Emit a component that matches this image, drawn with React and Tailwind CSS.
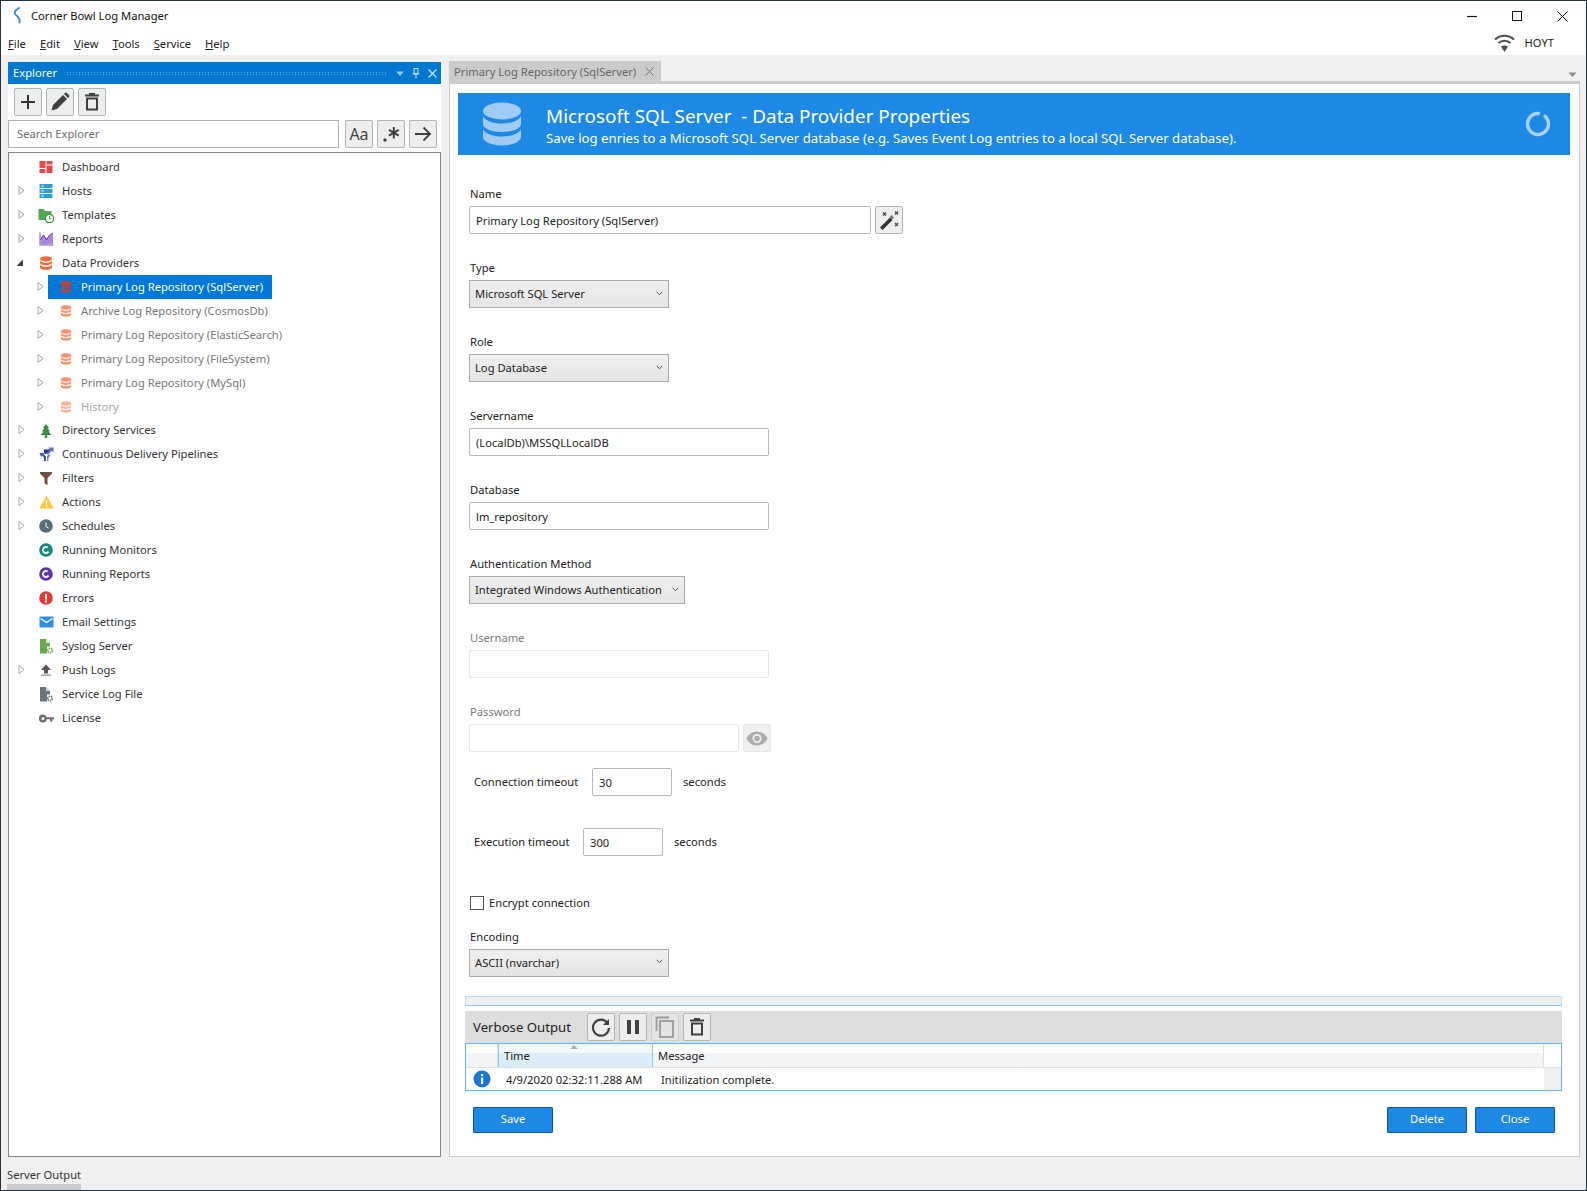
import React from "react";

const Chevron = ({ open }) =>
  open ? (
    <svg width="9" height="9" viewBox="0 0 9 9" className="mr-[2px] mb-[2px]"><path d="M8 1.5V8H1.5z" fill="#404040" /></svg>
  ) : (
    <svg width="9" height="11" viewBox="0 0 9 11" className="mb-[2px]"><path d="M2 1.5L7 5.5L2 9.5z" fill="#fff" stroke="#a6a6a6" /></svg>
  );

const Db = ({ color = "#ef6c3f", size = 14 }) => (
  <svg width={size} height={size} viewBox="0 0 14 14" fill={color}>
    <ellipse cx="7" cy="2.8" rx="6" ry="2.6" />
    <path d="M1 4.6C2 6.2 4.4 6.9 7 6.9s5-.7 6-2.3v2.2c0 1.5-2.7 2.5-6 2.5S1 8.300 1 6.800z" />
    <path d="M1 8.600C2 10.200 4.400 10.900 7 10.900s5-.7 6-2.300v2.600C13 12.700 10.300 13.800 7 13.800s-6-1.100-6-2.600z" />
  </svg>
);

const I = {
  dash: (
    <svg width="14" height="14" viewBox="0 0 14 14" fill="#e24c4c">
      <rect x="0.500" y="1" width="6" height="7" /><rect x="7.500" y="1" width="6" height="3.500" />
      <rect x="0.500" y="9" width="6" height="4" /><rect x="7.500" y="5.500" width="6" height="7.500" />
    </svg>
  ),
  hosts: (
    <svg width="14" height="16" viewBox="0 0 14 16">
      <g fill="#2b9fd9"><rect x="0.500" y="1" width="13" height="4" /><rect x="0.500" y="6" width="13" height="4" /><rect x="0.500" y="11" width="13" height="4" /></g>
      <g fill="#d4eefa"><rect x="2" y="2.500" width="3" height="1" /><rect x="2" y="7.500" width="3" height="1" /><rect x="2" y="12.500" width="3" height="1" /></g>
    </svg>
  ),
  tpl: (
    <svg width="16" height="15" viewBox="0 0 16 15">
      <path d="M0.500 1h5l1.500 2h6.500v9H0.500z" fill="#55a84f" />
      <circle cx="11.500" cy="10.500" r="4.200" fill="#fff" stroke="#3f9a44" strokeWidth="1.300" />
      <path d="M11.500 8v2.700h2" fill="none" stroke="#3f9a44" />
    </svg>
  ),
  rep: (
    <svg width="15" height="14" viewBox="0 0 15 14">
      <path d="M0.500 0.500h1v12h13v1h-14z" fill="#7d57c1" />
      <path d="M1.500 12.500V6l3-3 3 3.500L10 4l4-3v11.500z" fill="#a78ad8" />
      <path d="M1.500 8l3-5 3 5 3-5 3.500-2" fill="none" stroke="#6a3fb5" />
    </svg>
  ),
  tree: (
    <svg width="14" height="14" viewBox="0 0 14 14" fill="#3d8b40">
      <path d="M7 0L10 4H8.700L11 7.500H9.500L12.500 11H1.500L4.500 7.500H3L5.300 4H4z" /><rect x="5.800" y="11" width="2.400" height="3" fill="#5d7f3f" />
    </svg>
  ),
  pipe: (
    <svg width="15" height="14" viewBox="0 0 15 14" fill="#3f51b5">
      <path d="M9.500 0.500h5v5l-1.700-1.700-4 4-2.200-2.200 3.900-4z" fill="#5c6bc0" />
      <path d="M5 2.500h5v1.200L6.500 7.300 5 6z" fill="#283593" />
      <path d="M0.500 6h5l-1 1 2.500 2.500V14H5V10.500L3 8.500 2 9.800z" />
      <path d="M8 9l2-2 1.500 1.500L9.500 11V14H8z" fill="#7986cb" />
    </svg>
  ),
  filter: (
    <svg width="14" height="14" viewBox="0 0 14 14" fill="#6d4c41"><path d="M1 1h12v1.500L8.500 7v7l-3-1.500V7L1 2.500z" /></svg>
  ),
  warn: (
    <svg width="15" height="14" viewBox="0 0 15 14">
      <path d="M7.500 0.500L14.800 13.500H0.200z" fill="#fdc93b" /><rect x="6.900" y="5" width="1.300" height="4.500" fill="#fff" /><rect x="6.900" y="10.500" width="1.300" height="1.400" fill="#fff" />
    </svg>
  ),
  clock: (
    <svg width="14" height="14" viewBox="0 0 14 14">
      <circle cx="7" cy="7" r="6.800" fill="#546e7a" /><path d="M7 3.500V7.500L9.500 9" fill="none" stroke="#fff" strokeWidth="1" />
    </svg>
  ),
  cTeal: (
    <svg width="14" height="14" viewBox="0 0 14 14">
      <circle cx="7" cy="7" r="6.800" fill="#12897b" /><circle cx="7" cy="7" r="3" fill="none" stroke="#fff" strokeWidth="1.800" strokeDasharray="14 5" transform="rotate(30 7 7)" />
    </svg>
  ),
  cPurple: (
    <svg width="14" height="14" viewBox="0 0 14 14">
      <circle cx="7" cy="7" r="6.800" fill="#5e35b1" /><circle cx="7" cy="7" r="3" fill="none" stroke="#fff" strokeWidth="1.800" strokeDasharray="14 5" transform="rotate(30 7 7)" />
    </svg>
  ),
  err: (
    <svg width="14" height="14" viewBox="0 0 14 14">
      <circle cx="7" cy="7" r="6.800" fill="#e53935" /><rect x="6" y="3" width="2" height="5.500" fill="#fff" /><rect x="6" y="9.500" width="2" height="2" fill="#fff" />
    </svg>
  ),
  mail: (
    <svg width="15" height="12" viewBox="0 0 15 12">
      <rect x="0.500" y="0.500" width="14" height="11" rx="1" fill="#2f8de4" /><path d="M1.500 2.500L7.500 6.500L13.500 2.500" fill="none" stroke="#fff" strokeWidth="1.200" />
    </svg>
  ),
  sys: (
    <svg width="14" height="15" viewBox="0 0 14 15">
      <path d="M1 0h6l4 4v3.500H8V14.500H1z" fill="#6aa84f" /><path d="M7 0v4h4z" fill="#fff" opacity="0.700" /><circle cx="11" cy="11.500" r="2.300" fill="none" stroke="#6aa84f" strokeWidth="1.600" strokeDasharray="1.400 .7" />
    </svg>
  ),
  push: (
    <svg width="12" height="12" viewBox="0 0 12 12" fill="#555"><path d="M6 0.500L11 6H8v3.500H4V6H1z" /><rect x="1" y="10.500" width="10" height="1.200" fill="#888" /></svg>
  ),
  file: (
    <svg width="14" height="15" viewBox="0 0 14 15">
      <path d="M1 0h6l4 4v3.500H8V14.500H1z" fill="#6b747a" /><path d="M7 0v4h4z" fill="#fff" opacity="0.700" /><circle cx="11" cy="11.500" r="2.300" fill="none" stroke="#6b747a" strokeWidth="1.600" strokeDasharray="1.400 .7" />
    </svg>
  ),
  key: (
    <svg width="15" height="9" viewBox="0 0 15 9" fill="#707070"><path d="M4 0.500a4 4 0 0 1 3.800 2.700H15v2h-1.500V7.500H11V5.200H7.800A4 4 0 1 1 4 0.500zM4 3a1.500 1.500 0 1 0 0 3 1.500 1.500 0 0 0 0-3z" fillRule="evenodd" /></svg>
  ),
};

const rows = [
  { t: "Dashboard", i: I.dash },
  { t: "Hosts", i: I.hosts, e: 1 },
  { t: "Templates", i: I.tpl, e: 1 },
  { t: "Reports", i: I.rep, e: 1 },
  { t: "Data Providers", i: <Db />, e: 2 },
  { t: "Primary Log Repository (SqlServer)", c: 1, sel: 1 },
  { t: "Archive Log Repository (CosmosDb)", c: 1 },
  { t: "Primary Log Repository (ElasticSearch)", c: 1 },
  { t: "Primary Log Repository (FileSystem)", c: 1 },
  { t: "Primary Log Repository (MySql)", c: 1 },
  { t: "History", c: 2 },
  { t: "Directory Services", i: I.tree, e: 1, short: 1 },
  { t: "Continuous Delivery Pipelines", i: I.pipe, e: 1 },
  { t: "Filters", i: I.filter, e: 1 },
  { t: "Actions", i: I.warn, e: 1 },
  { t: "Schedules", i: I.clock, e: 1 },
  { t: "Running Monitors", i: I.cTeal },
  { t: "Running Reports", i: I.cPurple },
  { t: "Errors", i: I.err },
  { t: "Email Settings", i: I.mail },
  { t: "Syslog Server", i: I.sys },
  { t: "Push Logs", i: I.push, e: 1 },
  { t: "Service Log File", i: I.file },
  { t: "License", i: I.key },
];

const TreeRow = ({ r }) =>
  r.c ? (
    <div className="flex h-[24px] items-center">
      <div className="flex w-[36px] justify-end"><Chevron /></div>
      <div className={"ml-[3px] flex h-[24px] items-center pl-[12px] pr-[8px] " + (r.sel ? "w-[224px] bg-[#0078d7] text-white" : r.c === 2 ? "text-[#a8a8a8]" : "text-[#777777]")}>
        <span className={"mr-[9px] flex w-[12px] justify-center " + (r.sel ? "" : r.c === 2 ? "opacity-50" : "opacity-75")}>
          <Db size={12} color={r.sel ? "#d1402f" : "#ef6c3f"} />
        </span>
        <span className="whitespace-nowrap">{r.t}</span>
      </div>
    </div>
  ) : (
    <div className={"flex items-center " + (r.short ? "h-[23px]" : "h-[24px]")}>
      <div className="flex w-[17px] justify-end">{r.e === 1 && <Chevron />}{r.e === 2 && <Chevron open />}</div>
      <span className="ml-[12px] mr-[8px] flex w-[16px] justify-center">{r.i}</span>
      <span className="whitespace-nowrap text-[#333333]">{r.t}</span>
    </div>
  );

const IconBtn = ({ children, dim, w = "w-[28px]" }) => (
  <div className={"flex h-[28px] " + w + " items-center justify-center rounded-[2px] border border-[#b5b5b5] " + (dim ? "bg-[#e4e4e4] border-[#cfcfcf]" : "bg-[#eeeeee]")}>
    {children}
  </div>
);

const Label = ({ children, dim }) => (
  <div className={"h-[16px] pl-[1px] leading-[16px] " + (dim ? "text-[#7a7a7a]" : "text-[#222222]")}>{children}</div>
);

const Input = ({ w, value, dim }) => (
  <input
    readOnly
    value={value || ""}
    className={"block h-[28px] rounded-[2px] border bg-white px-[6px] outline-none " + w + " " + (dim ? "border-[#e6e6e6]" : "border-[#b9b9b9]")}
  />
);

const Select = ({ w, value }) => (
  <div className={"flex h-[28px] items-center justify-between border border-[#acacac] bg-gradient-to-b from-[#f0f0f0] to-[#e5e5e5] pl-[5px] pr-[5px] text-[#222222] " + w}>
    <span className="whitespace-nowrap pt-[1px]">{value}</span>
    <svg width="7" height="5" viewBox="0 0 7 5" className="mb-[2px]"><path d="M0.700 0.800L3.500 3.800L6.300 0.800" fill="none" stroke="#555" /></svg>
  </div>
);

const Field = ({ label, dim, children }) => (
  <div className="h-[74px]">
    <Label dim={dim}>{label}</Label>
    <div className="mt-[4px] flex gap-[4px]">{children}</div>
  </div>
);

const Trash = () => (
  <svg width="16" height="18" viewBox="0 0 16 18" fill="none" stroke="#404040" strokeWidth="2">
    <path d="M1 2.500h14" /><path d="M5 1h6" /><rect x="3" y="5.500" width="10" height="11" />
  </svg>
);

const PrimaryBtn = ({ children }) => (
  <div className="flex h-[26px] w-[80px] items-center justify-center rounded-[1px] border border-[#0f55a8] bg-[#1e88e5] text-white">{children}</div>
);

export default function App() {
  return (
    <div className="flex h-[1191px] w-[1587px] flex-col overflow-hidden border border-[#26323a] bg-[#f0f0f0] font-['Noto_Sans',sans-serif] text-[11.2px] text-[#222222]">
      {/* title bar */}
      <div className="flex h-[30px] items-center bg-white">
        <svg width="10" height="17" viewBox="0 0 10 17" className="ml-[11px] mb-[1px]" fill="none">
          <path d="M7 1C4 3 1.500 5 3.500 7.500S9 11 7.500 15.500" stroke="#3f8fe0" strokeWidth="2" strokeLinecap="round" />
        </svg>
        <span className="ml-[9px] text-[#111111]">Corner Bowl Log Manager</span>
        <div className="ml-auto mr-[18px] flex items-center gap-[35px]">
          <svg width="10" height="10" viewBox="0 0 10 10"><path d="M0 5.500h10" stroke="#111" strokeWidth="1.200" /></svg>
          <svg width="10" height="10" viewBox="0 0 10 10"><rect x="0.500" y="0.500" width="9" height="9" fill="none" stroke="#111" /></svg>
          <svg width="11" height="11" viewBox="0 0 11 11"><path d="M0.500 0.500l10 10M10.500 0.500l-10 10" stroke="#111" /></svg>
        </div>
      </div>
      {/* menu */}
      <div className="flex h-[24px] items-center bg-white">
        <div className="ml-[7px] flex gap-[14px] pt-[2px] text-[#222222]">
          <span><u>F</u>ile</span><span><u>E</u>dit</span><span><u>V</u>iew</span><span><u>T</u>ools</span><span><u>S</u>ervice</span><span><u>H</u>elp</span>
        </div>
        <div className="ml-auto mr-[32px] flex items-center gap-[10px]">
          <svg width="21" height="18" viewBox="0 0 21 18" fill="none" stroke="#4d4d4d" strokeWidth="2.200">
            <path d="M1 5.500C6.500 .5 14.500 .5 20 5.500" /><path d="M4.500 9C8 6 13 6 16.500 9" /><path d="M10.500 18L7 12.500c2-1.500 5-1.500 7 0z" fill="#4d4d4d" stroke="none" />
          </svg>
          <span className="pt-[1px] text-[#222222]">HOYT</span>
        </div>
      </div>
      {/* body */}
      <div className="flex min-h-0 flex-1 pl-[7px] pr-[6px]">
        {/* Explorer */}
        <div className="mt-[7px] flex w-[433px] flex-col bg-white">
          <div className="flex h-[22px] items-center bg-[#0078d0] pl-[5px] pr-[4px] text-white">
            <span className="pt-[1px]">Explorer</span>
            <div className="ml-[9px] h-[5px] flex-1 bg-[radial-gradient(#7fbce6_0.7px,transparent_0.8px)] bg-[length:3px_2.500px]" />
            <svg width="10" height="6" viewBox="0 0 10 6" className="ml-[8px] mt-[2px]"><path d="M1 0.500h8L5 5z" fill="#9cc9ec" /></svg>
            <svg width="8" height="11" viewBox="0 0 8 11" className="ml-[7px]" fill="none" stroke="#cfe5f6"><path d="M2 0.500h4v5H2zM0.500 6h7M4 6v4.500" /></svg>
            <svg width="9" height="9" viewBox="0 0 9 9" className="ml-[8px]"><path d="M0.500 0.500l8 8M8.500 0.500l-8 8" stroke="#cfe5f6" strokeWidth="1.200" /></svg>
          </div>
          <div className="mt-[4px] flex gap-[4px] pl-[6px]">
            <IconBtn>
              <svg width="16" height="16" viewBox="0 0 16 16"><path d="M8 1v14M1 8h14" stroke="#333" strokeWidth="2" /></svg>
            </IconBtn>
            <IconBtn>
              <svg width="20" height="20" viewBox="0 0 20 20" fill="#404040"><path d="M1.500 18.500l1.500-5.500L13 3l4 4L7 17z" /><path d="M14 2l1.200-1.200a1 1 0 0 1 1.400 0l2.600 2.600a1 1 0 0 1 0 1.400L18 6z" /></svg>
            </IconBtn>
            <IconBtn><Trash /></IconBtn>
          </div>
          <div className="mt-[4px] flex gap-[4px]">
            <div className="flex h-[28px] w-[331px] items-center border border-[#b2b2b2] bg-white pl-[8px] pt-[1px] text-[#6d6d6d]">Search Explorer</div>
            <div className="ml-[2px] flex gap-[4px]">
              <IconBtn><span className="text-[16px] text-[#444444]">Aa</span></IconBtn>
              <IconBtn>
                <svg width="20" height="20" viewBox="0 0 20 20" fill="#404040"><circle cx="4" cy="16" r="1.700" /><path d="M11.800 3h2v4l3.400-2 1 1.700L14.800 8.700l3.400 2-1 1.700-3.400-2v4h-2v-4l-3.400 2-1-1.700 3.400-2-3.400-2 1-1.700 3.400 2z" /></svg>
              </IconBtn>
              <IconBtn>
                <svg width="18" height="16" viewBox="0 0 18 16" fill="none" stroke="#404040" strokeWidth="1.800"><path d="M1 8h15M9.500 1.500L16 8l-6.500 6.500" /></svg>
              </IconBtn>
            </div>
          </div>
          <div className="mt-[4px] min-h-0 flex-1 border border-[#828790] pt-[2px]">
            {rows.map((r) => <TreeRow key={r.t} r={r} />)}
          </div>
        </div>

        {/* Right */}
        <div className="ml-[8px] flex min-w-0 flex-1 flex-col">
          <div className="flex h-[26px] shrink-0 items-end justify-between">
            <div className="flex h-[20px] w-[212px] items-center bg-[#cccccc] pl-[5px] pt-[2px] text-[#666666]">
              <span className="whitespace-nowrap">Primary Log Repository (SqlServer)</span>
              <svg width="9" height="9" viewBox="0 0 9 9" className="ml-auto mr-[7px] mb-[2px]"><path d="M0.500 0.500l8 8M8.500 0.500l-8 8" stroke="#777" /></svg>
            </div>
            <svg width="9" height="5" viewBox="0 0 9 5" className="mb-[4px] mr-[3px]"><path d="M0.500 0.500h8L4.500 5z" fill="#8a8a8a" /></svg>
          </div>
          <div className="flex min-h-0 flex-1 flex-col border border-t-[3px] border-[#cccccc] bg-white">
            <div className="ml-[8px] mr-[9px] mt-[9px] flex h-[62px] shrink-0 items-center bg-[#1e88e5] text-white">
              <svg width="40" height="44" viewBox="0 0 40 44" className="ml-[24px]" fill="#a0cbf6">
                <ellipse cx="20" cy="9" rx="19" ry="8.500" />
                <path d="M1 14.500c3 4.500 10 7 19 7s16-2.500 19-7V22c0 4.500-8.500 8-19 8s-19-3.500-19-8z" />
                <path d="M1 27.500c3 4.500 10 7 19 7s16-2.500 19-7V35c0 4.500-8.500 8.500-19 8.500S1 39.500 1 35z" />
              </svg>
              <div className="ml-[24px] flex flex-col pt-[1px]">
                <span className="text-[18.9px] leading-[26px]">Microsoft SQL Server&nbsp; - Data Provider Properties</span>
                <span className="text-[13.2px] leading-[18px]">Save log enries to a Microsoft SQL Server database (e.g. Saves Event Log entries to a local SQL Server database).</span>
              </div>
              <svg width="26" height="26" viewBox="0 0 26 26" className="ml-auto mr-[19px]" fill="none">
                <circle cx="13" cy="13" r="10.500" stroke="#a8d1f7" strokeWidth="3.400" strokeDasharray="61 5" transform="rotate(-55 13 13)" />
              </svg>
            </div>

            <div className="ml-[19px] mt-[31px] flex flex-col">
              <Field label="Name">
                <Input w="w-[402px]" value="Primary Log Repository (SqlServer)" />
                <IconBtn>
                  <svg width="22" height="22" viewBox="0 0 22 22">
                    <path d="M2 18.500L12 8.500l2.500 2.500L4.500 21z" fill="#333" /><path d="M11.500 8l2-2 2.500 2.500-2 2z" fill="#777" />
                    <path d="M5 3.500l3 3M8 3.500l-3 3M17 2.500l3 3M20 2.500l-3 3M17 14l3 3M20 14l-3 3" stroke="#444" strokeWidth="1.200" />
                  </svg>
                </IconBtn>
              </Field>
              <Field label="Type"><Select w="w-[200px]" value="Microsoft SQL Server" /></Field>
              <Field label="Role"><Select w="w-[200px]" value="Log Database" /></Field>
              <Field label="Servername"><Input w="w-[300px]" value="(LocalDb)\MSSQLLocalDB" /></Field>
              <Field label="Database"><Input w="w-[300px]" value="lm_repository" /></Field>
              <Field label="Authentication Method"><Select w="w-[216px]" value="Integrated Windows Authentication" /></Field>
              <Field label="Username" dim><Input w="w-[300px]" dim /></Field>
              <div className="h-[48px]">
                <Label dim>Password</Label>
                <div className="mt-[4px] flex gap-[4px]">
                  <Input w="w-[270px]" dim />
                  <div className="flex h-[28px] w-[28px] items-center justify-center rounded-[2px] border border-[#e6e6e6] bg-[#f0f0f0]">
                    <svg width="22" height="15" viewBox="0 0 22 15"><path d="M11 0.500C6 0.500 2.500 3.500 0.500 7.500c2 4 5.500 7 10.500 7s8.500-3 10.500-7c-2-4-5.500-7-10.500-7z" fill="#acacac" /><circle cx="11" cy="7.500" r="4.500" fill="#f0f0f0" /><circle cx="11" cy="7.500" r="2.800" fill="#acacac" /></svg>
                  </div>
                </div>
              </div>
              <div className="mt-[16px] flex items-center pl-[5px]">
                <span className="w-[118px] whitespace-nowrap">Connection timeout</span>
                <Input w="w-[80px]" value="30" />
                <span className="ml-[11px]">seconds</span>
              </div>
              <div className="mt-[32px] flex items-center pl-[5px]">
                <span className="w-[109px] whitespace-nowrap">Execution timeout</span>
                <Input w="w-[80px]" value="300" />
                <span className="ml-[11px]">seconds</span>
              </div>
              <div className="ml-[1px] mt-[39px] flex items-center gap-[5px]">
                <div className="h-[14px] w-[14px] border border-[#555555] bg-white" />
                <span>Encrypt connection</span>
              </div>
              <div className="mt-[17px]"><Label>Encoding</Label></div>
              <div className="mt-[4px]"><Select w="w-[200px]" value="ASCII (nvarchar)" /></div>
            </div>

            <div className="ml-[15px] mr-[17px] mt-[19px] flex flex-col">
              <div className="h-[10px] border border-[#bbdefb] border-b-[#90caf9] bg-[#efefef]" />
              <div className="mt-[5px] flex h-[32px] items-center bg-[#dedede] pl-[8px]">
                <span className="w-[114px] pt-[3px] text-[13.2px] text-[#222222]">Verbose Output</span>
                <div className="flex gap-[4px]">
                  <IconBtn>
                    <svg width="20" height="20" viewBox="0 0 20 20" fill="none" stroke="#404040" strokeWidth="2.200"><path d="M16.500 6A8 8 0 1 0 18 11" /><path d="M18 2v6h-6z" fill="#404040" stroke="none" /></svg>
                  </IconBtn>
                  <IconBtn>
                    <svg width="14" height="14" viewBox="0 0 14 14" fill="#404040"><rect x="1" y="0" width="4" height="14" /><rect x="9" y="0" width="4" height="14" /></svg>
                  </IconBtn>
                  <IconBtn dim>
                    <svg width="20" height="22" viewBox="0 0 20 22" fill="none" stroke="#9a9a9a" strokeWidth="1.800"><path d="M1.500 15V1.500H14" /><rect x="5" y="5" width="13" height="16" /></svg>
                  </IconBtn>
                  <IconBtn><Trash /></IconBtn>
                </div>
              </div>
              <div className="h-[48px] border border-[#64b5f6]">
                <div className="flex h-[24px] border-b border-[#e0e0e0]">
                  <div className="h-full w-[32px] border-r border-[#e0e0e0] bg-gradient-to-b from-white from-40% to-[#f3f4f6] to-40%" />
                  <div className="relative flex h-full w-[155px] items-end border-x border-[#90caf9] bg-gradient-to-b from-[#f2f9fd] from-40% to-[#dcedf7] to-40% pb-[2px] pl-[5px]">
                    <svg width="8" height="4" viewBox="0 0 8 4" className="absolute left-[71px] top-[1px]"><path d="M4 0l4 4H0z" fill="#9db6c6" /></svg>
                    Time
                  </div>
                  <div className="flex h-full flex-1 items-end border-r border-[#e0e0e0] bg-gradient-to-b from-white from-40% to-[#f3f4f6] to-40% pb-[2px] pl-[5px]">Message</div>
                  <div className="h-full w-[17px]" />
                </div>
                <div className="flex h-[22px] items-center">
                  <svg width="18" height="18" viewBox="0 0 18 18" className="ml-[7px]">
                    <circle cx="9" cy="9" r="8.500" fill="#1976d2" /><rect x="8" y="7.500" width="2.200" height="6.500" fill="#fff" /><rect x="8" y="4" width="2.200" height="2.200" fill="#fff" />
                  </svg>
                  <span className="ml-[15px] w-[155px] whitespace-nowrap pt-[3px]">4/9/2020 02:32:11.288 AM</span>
                  <span className="flex-1 pt-[3px]">Initilization complete.</span>
                  <div className="h-full w-[17px] bg-[#f0f0f0]" />
                </div>
              </div>
            </div>
            <div className="mt-[16px] flex justify-between pl-[23px] pr-[24px]">
              <PrimaryBtn>Save</PrimaryBtn>
              <div className="flex gap-[8px]">
                <PrimaryBtn>Delete</PrimaryBtn>
                <PrimaryBtn>Close</PrimaryBtn>
              </div>
            </div>
          </div>
        </div>
      </div>
      {/* footer */}
      <div className="flex h-[33px] shrink-0 flex-col justify-end pl-[6px]">
        <span className="leading-[16px] text-[#333333]">Server Output</span>
        <div className="mt-[1px] h-[6px] w-[74px] bg-[#cccccc]" />
      </div>
    </div>
  );
}
